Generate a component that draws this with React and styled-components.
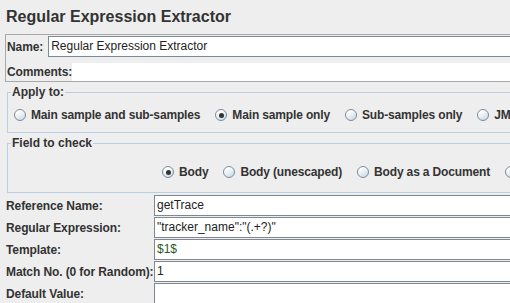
import React from "react";
import styled, { createGlobalStyle } from "styled-components";

const GlobalStyle = createGlobalStyle`
  body {
    margin: 0;
    background: #eeeeee;
    font-family: "Liberation Sans", Arial, sans-serif;
    color: #333333;
  }
`;

const applyOptions = [
  { label: "Main sample and sub-samples", checked: false },
  { label: "Main sample only", checked: true },
  { label: "Sub-samples only", checked: false },
  { label: "JMeter Variable Name to use", checked: false },
];

const fieldOptions = [
  { label: "Body", checked: true },
  { label: "Body (unescaped)", checked: false },
  { label: "Body as a Document", checked: false },
  { label: "Response Headers", checked: false },
];

const params = [
  { label: "Reference Name:", value: "getTrace" },
  { label: "Regular Expression:", value: "\"tracker_name\":\"(.+?)\"" },
  { label: "Template:", value: "$1$", $green: true },
  { label: "Match No. (0 for Random):", value: "1" },
  { label: "Default Value:", value: "" },
];

const Radio = ({ label, checked }) => (
  <RadioItem>
    <RadioCircle $checked={checked} />
    <RadioText>{label}</RadioText>
  </RadioItem>
);

const App = () => {
  return (
    <Page>
      <GlobalStyle />
      <Inner>
        <Title>Regular Expression Extractor</Title>
        <NamePanel>
          <NameRow>
            <Label>Name:</Label>
            <TextField>Regular Expression Extractor</TextField>
          </NameRow>
          <CommentsRow>
            <Label>Comments:</Label>
            <CommentArea />
          </CommentsRow>
        </NamePanel>

        <Group>
          <Legend>Apply to:</Legend>
          <RadioRow $top={8} $bottom={9} $left={6}>
            {applyOptions.map((o) => (
              <Radio key={o.label} {...o} />
            ))}
          </RadioRow>
        </Group>

        <Group>
          <Legend>Field to check</Legend>
          <RadioRow $top={14} $bottom={12} $left={154}>
            {fieldOptions.map((o) => (
              <Radio key={o.label} {...o} />
            ))}
          </RadioRow>
        </Group>

        <ParamGrid>
          {params.map((p) => (
            <React.Fragment key={p.label}>
              <ParamLabel>{p.label}</ParamLabel>
              <ParamField $green={p.$green}>{p.value}</ParamField>
            </React.Fragment>
          ))}
        </ParamGrid>
      </Inner>
    </Page>
  );
};

export default App;

const Page = styled.div`
  width: 510px;
  height: 303px;
  overflow: hidden;
`;

const Inner = styled.div`
  width: 760px;
  display: flex;
  flex-direction: column;
`;

const Title = styled.h2`
  margin: 0;
  padding: 7px 0 0 6px;
  height: 20px;
  font: bold 16px/20px "Liberation Sans", Arial, sans-serif;
  color: #333333;
`;

const NamePanel = styled.div`
  margin: 7px 0 0 5px;
  border: 1px solid #a8a8a8;
  padding: 1px 0 0 1px;
  display: flex;
  flex-direction: column;
`;

const Label = styled.span`
  font: bold 12px/14px "Liberation Sans", Arial, sans-serif;
  letter-spacing: -0.1px;
  color: #333333;
  white-space: nowrap;
`;

const NameRow = styled.div`
  display: flex;
  align-items: center;
  height: 21px;
  gap: 5px;
`;

const TextField = styled.div`
  flex: 1;
  height: 21px;
  box-sizing: border-box;
  border: 1px solid #7a8a99;
  background: #ffffff;
  padding: 0 0 0 2px;
  font: 12px/19px "Liberation Sans", Arial, sans-serif;
  color: #222222;
`;

const CommentsRow = styled.div`
  display: flex;
  align-items: center;
  height: 18px;
  margin-top: 6px;
`;

const CommentArea = styled.div`
  flex: 1;
  height: 18px;
  background: #ffffff;
`;

const Group = styled.fieldset`
  margin: 3px 0 0 7px;
  padding: 0;
  border: 1px solid #b8cfe5;
  min-width: 0;
`;

const Legend = styled.legend`
  margin-left: 3px;
  padding: 0 1px;
  font: bold 12px/14px "Liberation Sans", Arial, sans-serif;
  color: #333333;
`;

const RadioRow = styled.div`
  display: flex;
  align-items: center;
  height: 16px;
  padding: ${(p) => p.$top}px 0 ${(p) => p.$bottom}px ${(p) => p.$left}px;
  gap: 15px;
`;

const RadioItem = styled.span`
  display: inline-flex;
  align-items: center;
  gap: 5px;
  white-space: nowrap;
`;

const RadioCircle = styled.span`
  position: relative;
  width: 12px;
  height: 12px;
  box-sizing: border-box;
  border-radius: 50%;
  border: 1px solid #7a8a99;
  background: linear-gradient(150deg, #ffffff 20%, #cddbe8 90%);
  &::after {
    content: "";
    display: ${(p) => (p.$checked ? "block" : "none")};
    position: absolute;
    left: 2.5px;
    top: 2.5px;
    width: 5px;
    height: 5px;
    border-radius: 50%;
    background: #333333;
  }
`;

const RadioText = styled.span`
  font: bold 12px/14px "Liberation Sans", Arial, sans-serif;
  letter-spacing: -0.15px;
  color: #333333;
`;

const ParamGrid = styled.div`
  margin: 2px 0 0 6px;
  display: grid;
  grid-template-columns: 148px 1fr;
  grid-auto-rows: 21px;
  row-gap: 1px;
`;

const ParamLabel = styled.span`
  display: flex;
  align-items: center;
  font: bold 12px/14px "Liberation Sans", Arial, sans-serif;
  letter-spacing: -0.1px;
  color: #333333;
  white-space: nowrap;
`;

const ParamField = styled.div`
  box-sizing: border-box;
  border-top: 1px solid #7f8791;
  border-bottom: 1px solid #7f8791;
  border-left: 1px solid #7f8791;
  background: #ffffff;
  padding-left: 2px;
  font: 12px/19px "Liberation Sans", Arial, sans-serif;
  color: ${(p) => (p.$green ? "#2a5a2a" : "#222222")};
`;
